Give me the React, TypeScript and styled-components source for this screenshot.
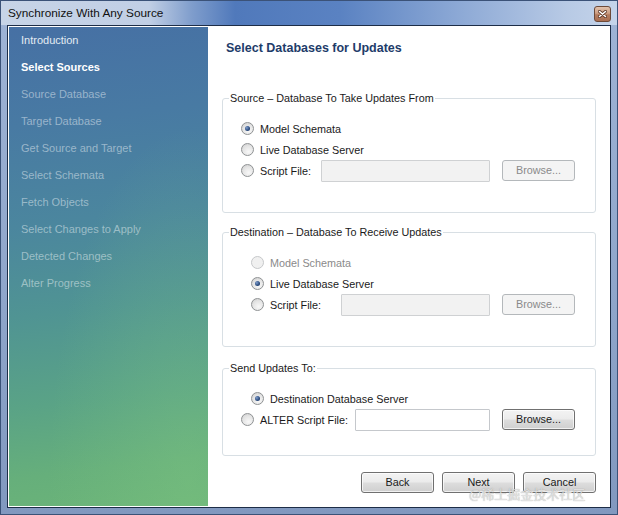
import React from 'react';
import styled, { createGlobalStyle } from 'styled-components';

const GlobalStyle = createGlobalStyle`
  html, body {
    margin: 0;
    padding: 0;
  }
  body {
    font-family: 'Liberation Sans', Arial, sans-serif;
    background: #8ba2c7;
  }
`;

type StepState = 'done' | 'current' | 'todo';

const steps: { label: string; state: StepState }[] = [
  { label: 'Introduction', state: 'done' },
  { label: 'Select Sources', state: 'current' },
  { label: 'Source Database', state: 'todo' },
  { label: 'Target Database', state: 'todo' },
  { label: 'Get Source and Target', state: 'todo' },
  { label: 'Select Schemata', state: 'todo' },
  { label: 'Fetch Objects', state: 'todo' },
  { label: 'Select Changes to Apply', state: 'todo' },
  { label: 'Detected Changes', state: 'todo' },
  { label: 'Alter Progress', state: 'todo' },
];

const CloseIcon = () => (
  <svg width="9" height="8" viewBox="0 0 9 8">
    <path d="M1.5 1.5 L7.5 6.5 M7.5 1.5 L1.5 6.5" stroke="#5a3526" strokeWidth="3" strokeLinecap="round" />
    <path d="M1.5 1.5 L7.5 6.5 M7.5 1.5 L1.5 6.5" stroke="#fff" strokeWidth="1.6" strokeLinecap="round" />
  </svg>
);

type OptionProps = {
  label: string;
  checked?: boolean;
  disabled?: boolean;
  indent?: boolean;
  file?: { width: number; enabled?: boolean };
};

const Option: React.FC<OptionProps> = ({ label, checked, disabled, indent, file }) => (
  <Row>
    <Radio $checked={checked} $disabled={disabled} $indent={indent} />
    <OptionLabel $disabled={disabled}>{label}</OptionLabel>
    {file && (
      <>
        <FileInput style={{ width: file.width }} $enabled={file.enabled} />
        <Button $disabled={!file.enabled}>Browse...</Button>
      </>
    )}
  </Row>
);

export default function App() {
  return (
    <>
      <GlobalStyle />
      <Window>
        <TitleBar>
          <Title>Synchronize With Any Source</Title>
          <CloseButton>
            <CloseIcon />
          </CloseButton>
        </TitleBar>
        <Body>
          <Sidebar>
            {steps.map((s) => (
              <Step key={s.label} $state={s.state}>
                {s.label}
              </Step>
            ))}
          </Sidebar>
          <Main>
            <Heading>Select Databases for Updates</Heading>
            <Group $bottom={31}>
              <Legend>Source – Database To Take Updates From</Legend>
              <Option label="Model Schemata" checked />
              <Option label="Live Database Server" />
              <Option label="Script File:" file={{ width: 167 }} />
            </Group>
            <Group $bottom={31} $top={12}>
              <Legend>Destination – Database To Receive Updates</Legend>
              <Option label="Model Schemata" indent disabled />
              <Option label="Live Database Server" indent checked />
              <Option label="Script File:" indent file={{ width: 147 }} />
            </Group>
            <Group $bottom={25} $top={14}>
              <Legend>Send Updates To:</Legend>
              <Option label="Destination Database Server" indent checked />
              <Option label="ALTER Script File:" file={{ width: 133, enabled: true }} />
            </Group>
            <Footer>
              <Button>Back</Button>
              <Button>Next</Button>
              <Button>Cancel</Button>
            </Footer>
          </Main>
        </Body>
        <Watermark>@稀土掘金技术社区</Watermark>
      </Window>
    </>
  );
}

const Window = styled.div`
  position: relative;
  width: 618px;
  height: 515px;
  box-sizing: border-box;
  border: 1px solid #3b5278;
  padding: 0 6px 6px 6px;
  background: linear-gradient(180deg, #9fb4d6 0%, #8ea5ca 60%, #8198bf 100%);
  display: flex;
  flex-direction: column;
`;

const TitleBar = styled.div`
  height: 24px;
  margin: 0 -6px;
  padding: 0 6px 0 7px;
  display: flex;
  align-items: center;
  background: linear-gradient(
    90deg,
    #c7d4e7 0%,
    #c1cfe5 24%,
    #7f9dcc 31%,
    #5079bb 38%,
    #5a82c2 55%,
    #8eaad6 75%,
    #b8cae5 92%,
    #c5d4ea 100%
  );
`;

const Title = styled.div`
  flex: 1;
  font-size: 11.8px;
  color: #111;
`;

const CloseButton = styled.div`
  width: 15px;
  height: 14px;
  border: 1px solid #6d4a39;
  border-radius: 3px;
  background: linear-gradient(180deg, #e2c2ad 0%, #cc9d82 45%, #b57d60 55%, #a86e52 100%);
  display: flex;
  align-items: center;
  justify-content: center;
  margin-top: 1px;
`;

const Body = styled.div`
  flex: 1;
  display: flex;
  border: 1px solid #1d2d47;
  padding: 1px;
  background: #fff;
`;

const Sidebar = styled.div`
  width: 199px;
  background:
    radial-gradient(ellipse at 90% 95%, rgba(130, 200, 130, 0.35) 0%, rgba(130, 200, 130, 0) 55%),
    linear-gradient(
      173deg,
      #4670a4 0%,
      #487aa3 20%,
      #4b869e 40%,
      #509493 58%,
      #5aa386 76%,
      #66af7b 90%,
      #6bb478 100%
    );
`;

const Step = styled.div<{ $state: StepState }>`
  height: 27px;
  line-height: 27px;
  padding-left: 12px;
  font-size: 11px;
  font-weight: ${(p) => (p.$state === 'current' ? 'bold' : 'normal')};
  color: ${(p) =>
    p.$state === 'current' ? '#ffffff' : p.$state === 'done' ? '#e4ecf3' : 'rgba(255,255,255,0.45)'};
`;

const Main = styled.div`
  flex: 1;
  padding: 13px 13px 0 14px;
  display: flex;
  flex-direction: column;
`;

const Heading = styled.div`
  font-size: 12.5px;
  line-height: 16px;
  font-weight: bold;
  color: #1e3c6a;
  padding-left: 4px;
  margin-bottom: 35px;
`;

const Group = styled.fieldset<{ $bottom: number; $top?: number }>`
  margin: ${(p) => p.$top ?? 0}px 0 0 0;
  padding: 13px 20px ${(p) => p.$bottom}px 0;
  border: 1px solid #d8dfe4;
  border-radius: 3px;
  min-width: 0;
`;

const Legend = styled.legend`
  font-size: 10.8px;
  line-height: 14px;
  color: #1a1a1a;
  padding: 0 1px;
  margin-left: 6px;
`;

const Row = styled.div`
  height: 21px;
  display: flex;
  align-items: center;
`;

const Radio = styled.span<{ $checked?: boolean; $disabled?: boolean; $indent?: boolean }>`
  position: relative;
  width: 11px;
  height: 11px;
  flex: none;
  margin-left: ${(p) => (p.$indent ? 28 : 18)}px;
  margin-right: 6px;
  border-radius: 50%;
  border: 1px solid ${(p) => (p.$disabled ? '#c6c8ca' : '#8f9294')};
  background: ${(p) =>
    p.$disabled
      ? '#f0f0f0'
      : 'radial-gradient(circle at 60% 70%, #f8f8f8 0%, #e4e4e4 55%, #c9c9c9 100%)'};

  &::after {
    content: '';
    display: ${(p) => (p.$checked ? 'block' : 'none')};
    position: absolute;
    left: 3px;
    top: 3px;
    width: 5px;
    height: 5px;
    border-radius: 50%;
    background: radial-gradient(circle at 35% 35%, #7d9ccc 0%, #2a4a7c 60%, #1b3461 100%);
  }
`;

const OptionLabel = styled.span<{ $disabled?: boolean }>`
  font-size: 10.8px;
  color: ${(p) => (p.$disabled ? '#8a8a8a' : '#1a1a1a')};
  white-space: nowrap;
  flex: 1;
`;

const FileInput = styled.div<{ $enabled?: boolean }>`
  height: 20px;
  flex: none;
  border: 1px solid ${(p) => (p.$enabled ? '#c5c8cc' : '#cfd1d3')};
  border-radius: 1px;
  background: ${(p) => (p.$enabled ? '#ffffff' : '#f2f2f2')};
  margin-right: 12px;
`;

const Button = styled.div<{ $disabled?: boolean }>`
  width: 71px;
  height: 19px;
  flex: none;
  border: 1px solid ${(p) => (p.$disabled ? '#b4b8bb' : '#707070')};
  border-radius: 3px;
  background: ${(p) =>
    p.$disabled
      ? '#f4f4f4'
      : 'linear-gradient(180deg, #f3f3f3 0%, #ebebeb 48%, #dddddd 52%, #cfcfcf 100%)'};
  box-shadow: ${(p) => (p.$disabled ? 'none' : 'inset 0 0 0 1px rgba(255,255,255,0.7)')};
  color: ${(p) => (p.$disabled ? '#8a8a8a' : '#1a1a1a')};
  font-size: 10.8px;
  line-height: 19px;
  text-align: center;
`;

const Footer = styled.div`
  margin-top: 16px;
  display: flex;
  justify-content: flex-end;
  gap: 8px;
`;

const Watermark = styled.div`
  position: absolute;
  left: 468px;
  top: 484px;
  font-family: 'Noto Sans CJK SC', sans-serif;
  font-size: 13px;
  line-height: 18px;
  color: rgba(235, 235, 235, 0.85);
  text-shadow: 0 0 1px rgba(90, 90, 90, 0.6);
  pointer-events: none;
`;
